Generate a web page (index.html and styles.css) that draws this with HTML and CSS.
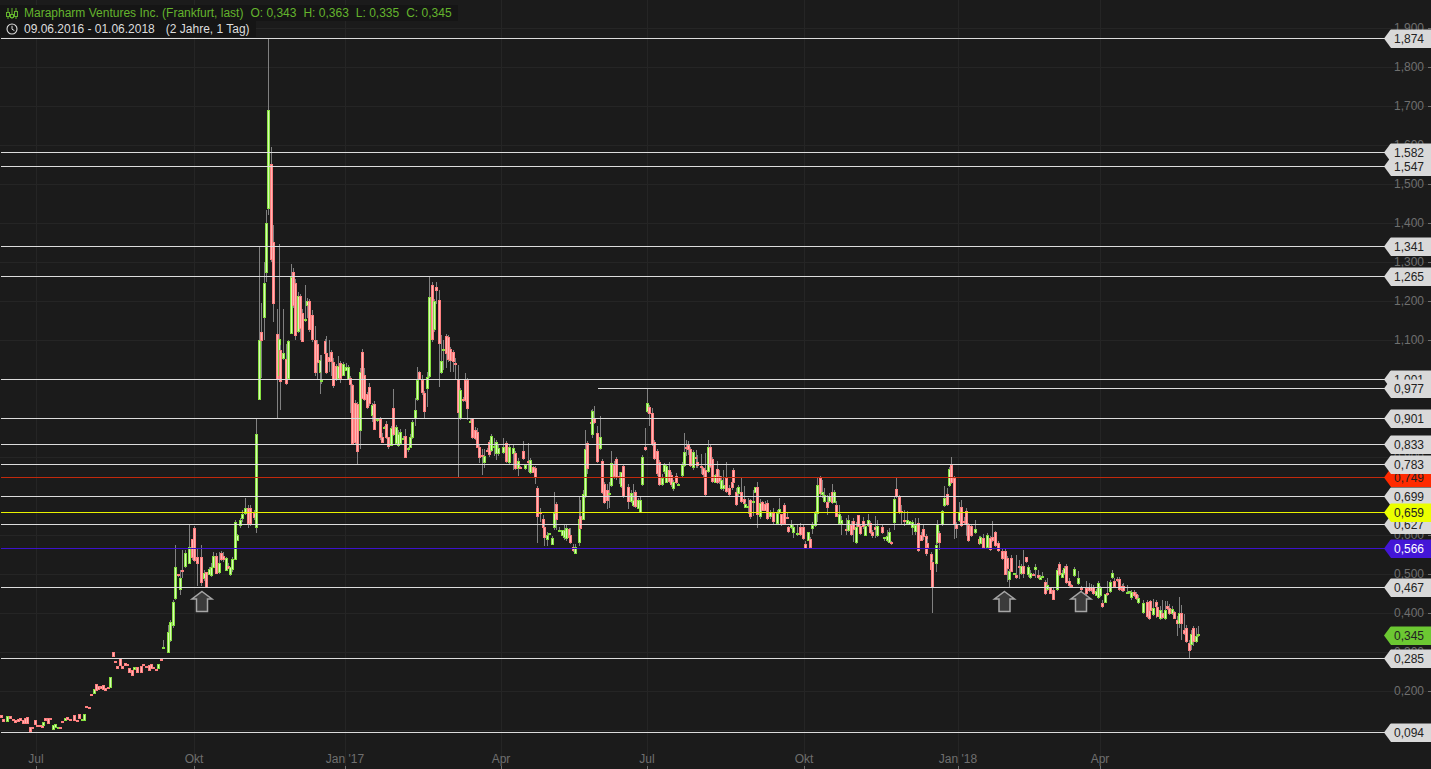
FILE: index.html
```html
<!DOCTYPE html>
<html lang="de">

<head>
  <meta charset="UTF-8">
  <title>Marapharm Ventures Inc.</title>
  <link rel="stylesheet" href="styles.css">
</head>

<body>
  <div class="chart" id="chart">
    <svg class="plot" id="plot" width="1431" height="769" xmlns="http://www.w3.org/2000/svg"></svg>

    <div class="legend">
      <div class="legend-row quote">
        <svg class="legend-icon" width="12" height="13" viewBox="0 0 12 13">
          <path d="M2 1v11M6 1v11M10 1v11" stroke="#64b42d" fill="none"/>
          <rect x="0.5" y="5.5" width="3" height="4" fill="#1b1b1b" stroke="#64b42d"/>
          <rect x="4.5" y="7.5" width="3" height="3" fill="#1b1b1b" stroke="#64b42d"/>
          <rect x="8.5" y="4.5" width="3" height="5" fill="#1b1b1b" stroke="#64b42d"/>
        </svg>
        <span class="name">Marapharm Ventures Inc. (Frankfurt, last)</span>
        <span>O: 0,343</span>
        <span>H: 0,363</span>
        <span>L: 0,335</span>
        <span>C: 0,345</span>
      </div>
      <div class="legend-row range">
        <svg class="legend-icon" width="12" height="12" viewBox="0 0 12 12">
          <circle cx="6" cy="6" r="5" fill="none" stroke="#dddddd" stroke-width="1.1"/>
          <path d="M6 2.8V6.2L8.4 7.6" fill="none" stroke="#dddddd"/>
        </svg>
        <span>09.06.2016 - 01.06.2018</span>
        <span class="span-len">(2 Jahre, 1 Tag)</span>
      </div>
    </div>
  </div>

  <script src="chart.js"></script>
</body>

</html>
```

FILE: styles.css
```css
* {
  box-sizing: border-box;
  margin: 0;
  padding: 0;
}

html,
body {
  height: 100%;
  overflow: hidden;
  background: #1b1b1b;
}

body {
  font-family: "Liberation Sans", Arial, sans-serif;
  font-size: 12px;
  line-height: 1.2;
}

.chart {
  position: relative;
  width: 1431px;
  height: 769px;
  overflow: hidden;
}

.plot {
  display: block;
}

.grid {
  stroke: #252525;
  stroke-width: 1;
}

.tick {
  stroke: #6f6f6f;
  stroke-width: 1;
}

.wick {
  stroke: #808080;
  stroke-width: 1;
}

.up {
  fill: #86e040;
}

.up-in {
  fill: #d8fbb4;
}

.down {
  fill: #ff8080;
}

.down-in {
  fill: #ffb4b4;
}

.level {
  stroke: #dcdcdc;
  stroke-width: 1;
}

.level.red {
  stroke: #c2290c;
}

.level.yellow {
  stroke: #e9f200;
}

.level.blue {
  stroke: #3c12cc;
}

.arrow {
  fill: #3b3b3b;
  stroke: #a6a6a6;
  stroke-width: 1.5;
}

.legend {
  position: absolute;
  left: 0;
  top: 5px;
}

.legend-row {
  display: flex;
  align-items: center;
  width: max-content;
  height: 16px;
  padding: 0 6px;
  background: #151515;
}

.legend-row.quote {
  gap: 7px;
  color: #64b42d;
}

.legend-row.range {
  color: #dddddd;
  gap: 11px;
}

.legend-icon {
  margin-right: -1px;
  flex: none;
}

.legend-row.range .legend-icon {
  margin-right: -5px;
}

.y-label {
  position: absolute;
  right: 7px;
  margin-top: -1px;
  color: #6f6f6f;
  transform: translateY(-50%);
}

.x-label {
  position: absolute;
  top: 752px;
  color: #6f6f6f;
  transform: translateX(-50%);
}

.tag {
  position: absolute;
  left: 1384px;
  display: flex;
  align-items: center;
  width: 47px;
  height: 19px;
  padding-left: 10px;
  color: #222222;
  background: #d9d9d9;
  clip-path: polygon(0 50%, 7px 0, 100% 0, 100% 100%, 7px 100%);
  transform: translateY(-50%);
}

.tag.red {
  background: #ff2a00;
}

.tag.yellow {
  background: #ebff00;
}

.tag.blue {
  color: #ffffff;
  background: #4316d6;
}

.tag.last {
  background: #6cc832;
}
```

FILE: chart.js
```js
// price axis: 39px for every 0.1
const priceY = p => 769 - 390 * p;

const months = [[36, 'Jul'], [194, 'Okt'], [345, "Jan '17"], [501, 'Apr'], [647, 'Jul'], [804, 'Okt'], [958, "Jan '18"], [1100, 'Apr']];

// value, colour, line starts at x; drawn in this order
const levels = [
  ['1,874'], ['1,582'], ['1,547'], ['1,341'], ['1,265'], ['1,001'], ['0,977', '', 598],
  ['0,901'], ['0,833'], ['0,749', 'red'], ['0,783'], ['0,699'], ['0,627'], ['0,659', 'yellow'],
  ['0,566', 'blue'], ['0,467'], ['0,285'], ['0,094']
];

// x, top, bottom, green?, wick top, wick bottom
const candles = [
  [1,715,717,0],[3,719,721,0],[7,716,721,1],[10,716,718,0],[13,719,720,0],[15,720,722,0],[18,719,721,0],[20,718,720,0],[23,720,723,0],[25,718,723,0],[27,717,723,0],
  [30,727,731,0],[32,727,728,0],[35,720,724,0],[37,725,726,0],[40,725,726,0],[42,725,727,0],[43,722,725,1],[45,718,720,0],[48,718,723,0],[50,718,719,0],
  [53,725,729,1],[55,724,727,1],[58,727,728,1],[60,727,728,0],[62,721,722,0],[65,718,720,1],[67,717,719,0],[70,719,720,0],[74,715,720,0],[77,720,721,0],[79,714,718,0],[82,719,720,1],[84,714,720,1],
  [86,706,707,0],[89,707,708,0],[91,694,695,0],[94,689,693,1],[96,684,690,0],[98,686,689,0],[101,686,688,0],[103,685,689,0],[105,688,690,0],[108,687,688,0],[110,677,687,1],
  [113,652,656,0],[115,661,662,0],[117,666,668,0],[120,658,665,0],[122,666,668,0],[125,663,665,0],[127,664,665,0],[129,668,672,0],[132,670,675,0],[134,667,669,1],[137,667,672,0],[141,666,672,0],
  [143,664,665,0],[146,666,667,0],[149,665,670,0],[151,664,668,0],[153,667,668,0],[156,669,670,0],[158,664,668,1],[161,659,660,0],[163,647,648,1,640,648],[168,632,652,1,625,652],
  [170,622,640,1,620,642],[173,602,625,1,600,628],[175,567,598,1,545,600],[178,574,575,0],[180,578,589,1,570,595],[182,570,571,0,550,578],[185,553,566,1,550,568],[189,547,563,1,524,564],
  [192,539,557,0],[194,528,560,0,526,562],[197,557,563,0,548,586],[201,557,582,0,545,586],[204,573,578,1],[206,572,587,0],[209,569,574,1],[211,567,575,1],[213,556,567,1,552,568],[216,556,573,0],[219,563,572,1,552,574],
  [221,553,559,0],[223,556,559,0,552,562],[226,558,570,1],[228,566,568,0],[230,567,574,1],[232,559,569,1],[235,522,559,1,520,560],[237,535,540,1],[240,520,525,1,518,528],[242,514,518,1,510,522],[245,508,513,1,498,515],
  [248,508,523,0,505,528],[250,508,523,0,505,526],[254,513,517,0],[256,434,527,1,418,533],[259,340,399,1,247,400],[261,332,340,0,303,378],[264,283,317,1,262,340],[266,223,272,1,210,282],[268,110,208,1,38,215],
  [271,164,259,0,147,262],[273,242,303,0,225,322],[277,334,379,0,309,418],[279,339,375,1,244,378],[280,350,381,0,345,410],[283,353,358,1,309,360],[286,359,383,0,344,385],[288,341,378,1,340,380],
  [291,277,333,1,264,334],[293,272,305,0,268,308],[295,283,335,0,279,340],[298,296,331,1,292,333],[300,296,328,0,294,340],[302,313,341,0,309,342],[305,319,320,1,285,322],[307,301,305,1,298,318],
  [309,301,329,0,299,332],[312,315,339,0,310,342],[315,340,372,0,326,376],[317,344,362,0,340,379],[320,360,372,1,355,394],[321,380,381,1,355,384],[325,341,353,0,339,372],[326,353,372,0,336,374],
  [329,357,361,0,340,372],[331,352,361,0,350,376],[333,362,385,0,358,388],[336,366,379,0,364,381],[338,366,378,1,356,380],[340,363,378,0,361,383],[343,364,375,1],[346,367,370,1],[348,367,379,1,365,380],
  [350,378,384,0,376,413],[352,385,443,0,384,445],[355,403,442,0,400,444],[357,404,451,0,402,464],[360,372,430,1,368,449],[362,352,398,0],[364,375,399,0,368,401],[367,394,407,0],[369,387,403,0],[372,405,415,1,403,422],
  [374,404,429,0],[377,419,420,1],[380,419,437,0],[382,437,442,0],[384,427,428,1],[386,424,437,0],[388,437,446,0],[391,428,445,1],[393,408,434,0,389,436],[396,427,443,1,425,445],[398,434,445,1,430,447],[400,432,443,1,429,445],
  [403,438,439,1],[405,436,457,0,429,458],[408,448,449,1],[410,437,447,1],[412,422,437,1,420,439],[415,410,418,1,398,426],[417,380,399,1,367,401],[419,372,379,0],[422,380,392,0,375,395],[424,393,411,0,391,418],
  [427,377,388,1,372,407],[429,297,376,1,277,378],[432,285,339,0,282,342],[434,301,329,1,299,332],[436,287,290,0,282,304],[439,300,343,0,290,387],[441,361,372,1,335,374],[443,349,350,1,340,370],
  [446,336,353,0,334,368],[448,337,359,0,335,362],[450,349,360,0,347,372],[453,352,361,0,350,372],[455,363,364,0,358,380],[458,379,412,0,365,477],[460,390,418,1,388,420],[463,399,400,0],[465,380,400,0,373,402],[467,380,408,0,378,420],
  [470,421,422,1],[472,418,437,0],[475,430,438,0,427,440],[477,432,447,0],[479,447,457,0,445,463],[482,455,456,0,449,475],[484,456,462,1,449,468],[487,450,451,0],[489,442,454,0,440,457],[491,436,450,1,434,452],[494,446,447,1,438,456],
  [496,442,453,1,440,460],[498,448,453,1,444,456],[503,447,452,1,438,454],[506,443,461,0,441,463],[509,447,462,1,445,464],[513,448,453,1,445,470],[515,453,468,0,451,470],[518,461,468,1,458,476],[520,467,468,0],
  [523,451,458,0,441,460],[525,465,468,1],[528,461,462,0,443,472],[530,460,472,1,458,474],[533,467,472,0],[535,468,477,0,466,484],[537,488,516,0,486,543],[540,512,513,0,508,522],[543,519,527,0],[544,527,537,0,525,546],
  [547,535,539,1,532,546],[549,533,534,1],[552,538,544,1],[554,513,527,1,492,530],[556,504,519,0,502,530],[559,530,531,1],[562,530,535,1],[564,530,537,1,524,540],[566,528,538,1],[569,529,537,0],[570,535,542,0,528,544],
  [573,547,550,0,544,552],[575,547,553,1,544,554],[579,519,542,1,497,546],[580,516,528,0,500,530],[583,494,519,1,490,520],[585,449,496,1,430,498],[587,443,468,0,441,474],[591,422,423,0,410,435],[592,411,434,1,409,438],
  [594,418,422,0,406,424],[597,433,461,0,426,463],[600,437,448,1,416,450],[602,461,492,0,459,494],[604,484,502,0,482,504],[607,490,500,0,484,509],[609,493,494,1,482,508],[611,463,485,1,451,487],[614,465,476,0],[616,459,477,0,457,480],
  [619,476,477,0,472,484],[621,472,486,1],[623,466,496,0,464,498],[628,487,501,0,484,509],[631,493,501,1,490,503],[633,500,505,1,484,507],[635,492,506,0,490,508],[638,500,508,1],[640,500,512,1],[642,457,484,1,455,486],
  [645,447,449,0,428,451],[647,403,411,1,388,413],[649,407,413,0,405,426],[652,413,444,0,408,446],[654,442,458,0,440,460],[657,451,473,0,449,476],[659,462,484,0,460,486],[662,478,484,1,474,486],[664,465,471,1,463,474],
  [666,466,482,1],[669,470,481,0,462,483],[671,475,484,0,472,487],[673,482,488,1],[676,476,482,0,473,484],[678,484,485,1],[682,465,475,1],[684,452,465,1,433,467],[686,447,448,0,440,456],[688,445,449,0,441,455],[690,449,465,0,447,467],
  [693,452,467,1,450,470],[696,457,458,0,450,468],[697,462,465,0,455,468],[701,466,467,0,454,474],[703,468,474,0],[705,470,494,0,453,496],[708,447,471,1,440,473],[710,447,466,0,445,468],[712,459,481,0,457,483],[715,475,482,1],
  [717,469,482,0,461,484],[719,476,481,0,470,484],[721,480,488,1,476,490],[723,485,488,1,470,491],[726,478,491,0,462,493],[729,488,494,0],[732,482,487,0,470,490],[733,470,482,0,468,484],[736,492,504,0,488,506],[738,487,493,1,485,496],
  [741,492,501,0,478,503],[744,499,503,0,486,505],[745,504,507,1],[748,506,507,1,498,514],[750,500,516,0],[753,501,502,1,490,516],[755,487,492,1],[757,487,514,0,482,528],[760,503,516,1],[762,502,510,0],[765,504,510,0],
  [767,503,518,0,500,520],[770,512,516,1],[773,513,521,0,508,524],[777,513,523,1,510,524],[779,509,512,1,498,514],[781,514,523,0],[784,505,523,0,503,525],[787,517,518,0],[788,527,531,0],[791,524,527,1,520,529],
  [793,527,532,1,525,538],[797,533,534,1,524,536],[800,527,534,0,523,536],[803,527,538,0,525,540],[805,544,548,0],[808,532,540,1],[810,539,547,0],[812,525,528,1,522,534],[815,513,525,1,511,527],[817,485,513,1,478,522],
  [820,478,493,0,476,496],[822,492,494,1,480,498],[824,495,501,1,488,503],[827,502,507,0,495,515],[829,496,501,1],[832,492,502,0,484,504],[834,492,502,1],[836,505,516,0],[839,514,523,1,505,525],[841,520,523,1,516,535],
  [846,529,530,0,518,535],[848,520,530,1,515,532],[851,525,534,0],[853,521,529,0,518,542],[856,527,542,1,522,544],[858,515,526,0],[860,526,533,0],[863,521,526,0],[865,526,535,1],[868,520,525,1,514,527],[870,523,532,0,521,534],
  [872,532,535,0],[875,527,529,0,516,538],[877,526,535,1,520,537],[882,527,532,0,524,534],[884,537,538,1],[887,536,540,1,530,542],[889,532,542,1],[891,542,543,0],[894,499,522,1,497,530],[896,489,496,0,478,498],[899,497,512,0,495,514],
  [901,511,512,0,505,524],[904,520,521,0,510,526],[907,520,523,1,511,525],[909,521,524,1],[912,522,527,1,520,535],[915,525,531,1,518,535],[918,523,550,0,518,552],[921,535,540,0],[923,529,536,0,525,540],[926,536,553,0],[927,543,547,0],
  [931,554,569,0,552,574],[932,562,587,0,560,613],[936,545,563,1,542,572],[937,524,542,1,520,544],[939,533,542,0,531,550],[942,511,524,1],[944,498,505,1,486,507],[947,494,504,0,488,506],[949,469,485,1,467,487],[951,465,482,0,457,484],
  [954,478,524,0,476,539],[956,524,528,0,522,538],[959,512,520,1,502,522],[961,507,525,0,500,527],[964,521,522,0],[966,511,524,0,508,536],[968,525,540,0,523,542],[971,526,535,0,524,537],[975,529,532,1,520,534],[979,539,543,0,536,545],
  [980,537,543,1],[983,538,547,0,534,549],[987,535,547,1,533,549],[990,538,549,0,536,551],[992,537,540,0,521,542],[995,532,545,0],[998,543,550,0,541,552],[1002,551,558,0,548,560],[1005,551,574,0],[1007,558,568,0,556,582],
  [1009,571,579,1,569,588],[1011,558,571,0],[1014,573,574,1],[1016,575,577,0,555,579],[1019,566,567,0,560,579],[1021,566,573,1,564,575],[1023,566,573,0,550,578],[1026,557,561,0],[1028,567,574,1],[1030,573,577,1,570,579],[1033,574,575,0],
  [1035,567,569,1,564,578],[1038,575,577,0,570,579],[1040,577,579,1],[1042,576,577,1],[1045,582,593,0,580,595],[1047,585,589,1,578,591],[1050,587,593,0],[1053,590,599,0,588,600],[1057,570,589,1,568,591],[1059,564,574,0,562,576],
  [1062,573,577,1],[1064,568,573,1,566,575],[1066,566,582,0,564,584],[1069,581,585,0,578,587],[1071,585,586,0],[1074,569,575,1,567,577],[1078,578,583,1,571,585],[1081,588,589,0],[1086,588,593,0,581,595],[1089,587,590,0,583,592],
  [1091,587,590,0],[1093,587,593,0,585,595],[1096,591,595,1],[1098,583,597,1,581,599],[1100,588,595,1,586,597],[1102,603,606,0,600,608],[1105,594,602,1],[1107,593,594,0,581,596],[1110,582,591,1,580,593],[1112,573,577,1,570,579],
  [1114,581,586,0],[1117,579,580,0,577,582],[1119,579,589,0],[1122,586,590,0,584,592],[1123,586,590,0,583,592],[1127,592,593,1,585,594],[1129,591,592,1],[1131,592,597,1],[1134,592,595,0,590,597],[1136,594,598,0,592,600],[1138,598,602,1],
  [1143,603,612,1,600,614],[1147,602,616,0,600,618],[1149,610,618,0,601,620],[1150,601,610,0],[1153,608,614,1,599,616],[1156,602,606,0,600,618],[1157,607,616,0],[1160,610,618,1],[1162,613,617,0,600,619],[1165,610,618,1,601,620],
  [1167,606,608,0,601,610],[1169,608,613,0,604,615],[1172,609,613,1,606,615],[1174,612,618,0],[1177,620,623,0,616,636],[1179,613,623,1,597,628],[1181,613,623,0,605,640],[1184,630,633,0,614,635],[1186,628,641,0,625,643],[1189,643,650,0,640,658],
  [1191,634,644,1,630,650],[1193,628,641,0,626,646],[1196,636,641,1,628,643],[1198,634,635,1,626,637]
];

const svg = document.getElementById('plot');
const chart = document.getElementById('chart');

function el(name, attrs) {
  const node = document.createElementNS('http://www.w3.org/2000/svg', name);
  Object.keys(attrs).forEach(key => node.setAttribute(key, attrs[key]));
  svg.appendChild(node);
  return node;
}

function line(x1, y1, x2, y2, cls) {
  el('line', { x1: x1, y1: y1, x2: x2, y2: y2, class: cls });
}

function label(cls, text, style) {
  const node = document.createElement('div');
  node.className = cls;
  node.textContent = text;
  Object.assign(node.style, style);
  chart.appendChild(node);
}

function drawGrid() {
  for (let i = 1; i <= 19; i++) {
    const y = Math.round(priceY(i / 10)) + 0.5;
    line(0, y, 1431, y, 'grid');
    line(1428, y, 1431, y, 'tick');
    label('y-label', (i / 10).toFixed(3).replace('.', ','), { top: y + 'px' });
  }
  months.forEach(m => {
    line(m[0] + 0.5, 0, m[0] + 0.5, 769, 'grid');
    line(m[0] + 0.5, 766, m[0] + 0.5, 769, 'tick');
    label('x-label', m[1], { left: m[0] + 'px' });
  });
}

function drawCandles() {
  candles.forEach((c, i) => {
    const [x, top, bottom, green] = c;
    // no trades outside the body in the thin first months
    const wickTop = c[4] !== undefined ? c[4] : (x < 165 ? top : top - (i * 7) % 5);
    const wickBottom = c[5] !== undefined ? c[5] : (x < 165 ? bottom : bottom + (i * 5) % 4);
    if (wickTop < top || wickBottom > bottom) {
      line(x + 0.5, wickTop, x + 0.5, wickBottom, 'wick');
    }
    const height = bottom - top + 1;
    el('rect', { x: x - 1, y: top, width: 3, height: height, class: green ? 'up' : 'down' });
    if (height > 2) {
      el('rect', { x: x, y: top + 1, width: 1, height: height - 2, class: green ? 'up-in' : 'down-in' });
    }
  });
}

function drawLevels() {
  levels.forEach(l => {
    const price = parseFloat(l[0].replace(',', '.'));
    const y = Math.round(priceY(price)) + 0.5;
    line(l[2] || 1, y, 1386, y, ('level ' + (l[1] || '')).trim());
    label(('tag ' + (l[1] || '')).trim(), l[0], { top: y + 'px' });
  });
  label('tag last', '0,345', { top: '635.5px' });
}

function drawArrows() {
  [202, 1004.5, 1081].forEach(x => {
    const pts = [[0, 0], [10, 7.5], [5.5, 7.5], [5.5, 20], [-5.5, 20], [-5.5, 7.5], [-10, 7.5]];
    el('polygon', { points: pts.map(p => (x + p[0]) + ',' + (591.5 + p[1])).join(' '), class: 'arrow' });
  });
}

drawGrid();
drawCandles();
drawLevels();
drawArrows();
```
